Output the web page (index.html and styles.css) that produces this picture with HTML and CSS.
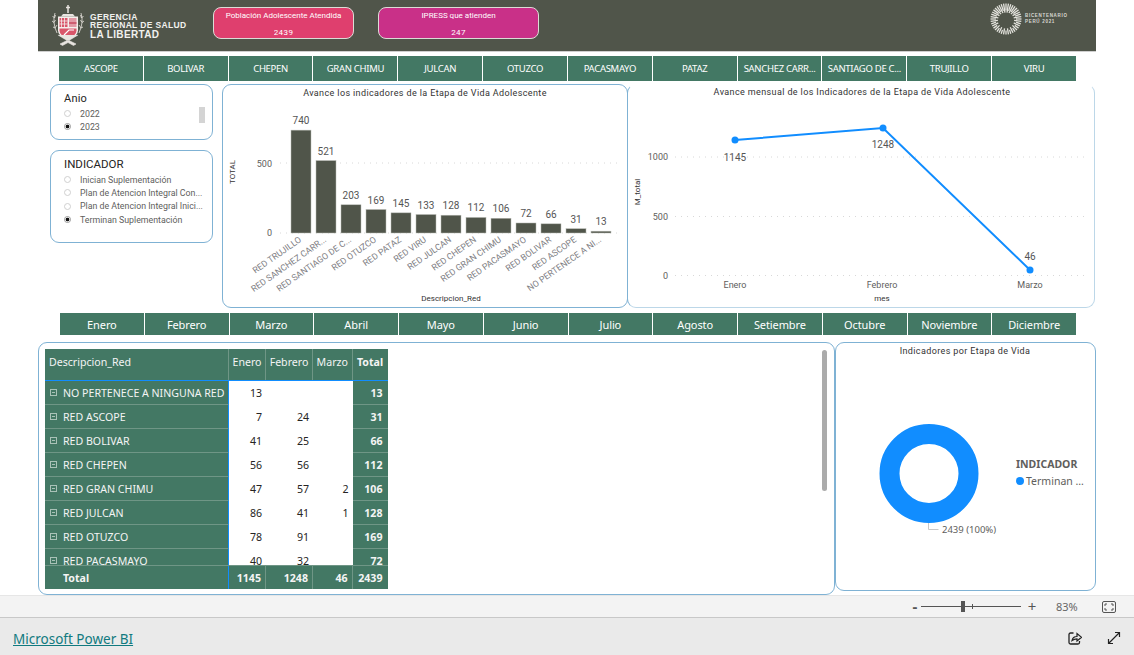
FILE: index.html
```html
<!DOCTYPE html>
<html lang="es">

<head>
    <meta charset="UTF-8">
    <title>Microsoft Power BI</title>
    <link rel="stylesheet" href="styles.css">
</head>

<body>
    <main class="report">
        <header class="banner">
            <div class="brand">
                <svg class="shield" viewBox="0 0 36 44" width="36" height="44">
                    <path d="M16 1v8M14 3.500h4" stroke="#e8e4e0" stroke-width="1.500" fill="none"/>
                    <path d="M11 10h10l2 2.500H9z" fill="#e8e4e0"/>
                    <path d="M6 12.500h20v14q0 6-10 9.500q-10-3.500-10-9.500z" fill="#f4efec"/>
                    <rect x="7.500" y="14" width="8" height="9" fill="#d9566a"/>
                    <path d="M9.500 14v9M12.500 14v9M7.500 17h8M7.500 20h8" stroke="#f4efec" stroke-width="0.800"/>
                    <rect x="17" y="14" width="7.500" height="9" fill="#e39aa6"/>
                    <path d="M17 19h7.500" stroke="#c9495f" stroke-width="1.500"/>
                    <path d="M7.500 24.500h17v2q0 5-8.500 8q-8.500-3-8.500-8z" fill="#d9566a"/>
                    <path d="M12 31l5-5h5" stroke="#fff" stroke-width="1.200" fill="none"/>
                    <path d="M3 9q-3 9 2 20M0.500 12l2 2M3.500 11l-1 3M0 17l2 1.500M3.500 16l-1.500 2.500M1 23l2 1M5 21l-2 3M29 9q3 9-2 20M31.500 12l-2 2M28.500 11l1 3M32 17l-2 1.500M28.500 16l1.500 2.500M31 23l-2 1M27 21l2 3" stroke="#e8e4e0" stroke-width="0.800" fill="none"/>
                    <path d="M6 31l10 6l10-6M8 40l8-4l8 4l-2.500 1.500l-5.500-3l-5.500 3z" stroke="#e8e4e0" fill="#e8e4e0" stroke-width="0.600"/>
                </svg>
                <div class="brand-text">
                    <span>GERENCIA</span>
                    <span>REGIONAL DE SALUD</span>
                    <span class="brand-big">LA LIBERTAD</span>
                </div>
            </div>
            <div class="kpi kpi-red">
                <span>Población Adolescente Atendida</span>
                <span>2439</span>
            </div>
            <div class="kpi kpi-pink">
                <span>IPRESS que atienden</span>
                <span>247</span>
            </div>
            <div class="bicentenario">
                <svg id="sun" viewBox="0 0 32 32" width="32" height="32"></svg>
                <div class="bicentenario-text">
                    <span>BICENTENARIO</span>
                    <span>PERÚ 2021</span>
                </div>
            </div>
        </header>

        <nav class="tabs tabs-red">
            <a>ASCOPE</a>
            <a>BOLIVAR</a>
            <a>CHEPEN</a>
            <a>GRAN CHIMU</a>
            <a>JULCAN</a>
            <a>OTUZCO</a>
            <a>PACASMAYO</a>
            <a>PATAZ</a>
            <a>SANCHEZ CARR...</a>
            <a>SANTIAGO DE C...</a>
            <a>TRUJILLO</a>
            <a>VIRU</a>
        </nav>

        <section class="row-top">
            <div class="slicers">
                <div class="card slicer slicer-year">
                    <h3>Anio</h3>
                    <div class="slicer-scroll"></div>
                    <label class="opt"><i class="radio"></i>2022</label>
                    <label class="opt"><i class="radio on"></i>2023</label>
                </div>
                <div class="card slicer slicer-ind">
                    <h3>INDICADOR</h3>
                    <label class="opt"><i class="radio"></i>Inician Suplementación</label>
                    <label class="opt"><i class="radio"></i>Plan de Atencion Integral Con...</label>
                    <label class="opt"><i class="radio"></i>Plan de Atencion Integral Inici...</label>
                    <label class="opt"><i class="radio on"></i>Terminan Suplementación</label>
                </div>
            </div>

            <div class="card chart-bar">
                <svg id="bars" viewBox="0 0 405 224" width="405" height="224">
                    <text class="chart-title" x="203" y="12">Avance los indicadores de la Etapa de Vida Adolescente</text>
                    <text class="axis-name" transform="translate(13 88) rotate(-90)">TOTAL</text>
                    <text class="axis-name" x="229" y="217">Descripcion_Red</text>
                    <text class="tick" x="50" y="83" text-anchor="end">500</text>
                    <text class="tick" x="50" y="152" text-anchor="end">0</text>
                    <line class="grid" x1="58" y1="79" x2="400" y2="79"/>
                    <line class="grid" x1="58" y1="149" x2="400" y2="149"/>
                </svg>
            </div>

            <div class="card chart-line">
                <svg viewBox="0 0 468 224" width="468" height="224">
                    <text class="chart-title" x="235" y="11">Avance mensual de los Indicadores de la Etapa de Vida Adolescente</text>
                    <text class="axis-name" transform="translate(13 108) rotate(-90)">M_total</text>
                    <text class="axis-name" x="255" y="217">mes</text>
                    <text class="tick" x="41" y="76" text-anchor="end">1000</text>
                    <text class="tick" x="41" y="136" text-anchor="end">500</text>
                    <text class="tick" x="41" y="195" text-anchor="end">0</text>
                    <line class="grid" x1="48" y1="73" x2="461" y2="73"/>
                    <line class="grid" x1="48" y1="132.500" x2="461" y2="132.500"/>
                    <line class="grid" x1="48" y1="191.500" x2="461" y2="191.500"/>
                    <polyline class="trend" points="108,56 256,44 403,186"/>
                    <circle class="dot" cx="108" cy="56" r="3.500"/>
                    <circle class="dot" cx="256" cy="44" r="3.500"/>
                    <circle class="dot" cx="403" cy="186" r="3.500"/>
                    <text class="value" x="108" y="77">1145</text>
                    <text class="value" x="256" y="64">1248</text>
                    <text class="value" x="403" y="176">46</text>
                    <text class="tick" x="108" y="204" text-anchor="middle">Enero</text>
                    <text class="tick" x="255" y="204" text-anchor="middle">Febrero</text>
                    <text class="tick" x="403" y="204" text-anchor="middle">Marzo</text>
                </svg>
            </div>
        </section>

        <nav class="tabs tabs-month">
            <a>Enero</a>
            <a>Febrero</a>
            <a>Marzo</a>
            <a>Abril</a>
            <a>Mayo</a>
            <a>Junio</a>
            <a>Julio</a>
            <a>Agosto</a>
            <a>Setiembre</a>
            <a>Octubre</a>
            <a>Noviembre</a>
            <a>Diciembre</a>
        </nav>

        <section class="row-bottom">
            <div class="card matrix-card">
                <div class="matrix">
                    <div class="m-head">
                        <div class="m-name">Descripcion_Red</div>
                        <div>Enero</div>
                        <div>Febrero</div>
                        <div>Marzo</div>
                        <div class="m-total">Total</div>
                    </div>
                    <div class="m-body" id="matrix-body"></div>
                    <div class="m-foot">
                        <div class="m-name m-foot-name">Total</div>
                        <div>1145</div>
                        <div>1248</div>
                        <div>46</div>
                        <div>2439</div>
                    </div>
                </div>
                <div class="scrollbar"></div>
            </div>

            <div class="card chart-donut">
                <svg viewBox="0 0 261 249" width="261" height="249">
                    <text class="chart-title" x="130" y="12">Indicadores por Etapa de Vida</text>
                    <circle class="ring" cx="94" cy="131.500" r="39.500"/>
                    <path class="leader" d="M93.500 181v6.500h10"/>
                    <text class="donut-label" x="107" y="191">2439 (100%)</text>
                    <text class="legend-title" x="181" y="126">INDICADOR</text>
                    <circle class="dot" cx="185" cy="139" r="4"/>
                    <text class="legend-item" x="191" y="143">Terminan ...</text>
                </svg>
            </div>
        </section>
    </main>

    <div class="zoom-bar">
        <span class="zoom-sign">-</span>
        <div class="zoom-track"><i class="zoom-mark"></i><i class="zoom-thumb"></i></div>
        <span class="zoom-sign zoom-plus">+</span>
        <span class="zoom-pct">83%</span>
        <svg class="fit" viewBox="0 0 14 12" width="14" height="12">
            <rect x="0.500" y="0.500" width="13" height="11" rx="1.500" fill="none" stroke="#555"/>
            <path d="M3 5V3h2M9 3h2v2M11 7v2H9M5 9H3V7" fill="none" stroke="#555"/>
        </svg>
    </div>

    <footer class="foot">
        <a class="foot-link">Microsoft Power BI</a>
        <div class="foot-icons">
            <svg viewBox="0 0 14 14" width="14" height="14">
                <path d="M5.500 2H2.500A1.500 1.500 0 0 0 1 3.500v8A1.500 1.500 0 0 0 2.500 13h7.500a1.500 1.500 0 0 0 1.500-1.500V10" fill="none" stroke="#222" stroke-width="1.300"/>
                <path d="M4 9.500q.8-4 5-4V2.500l4.500 3.800L9 10V7.800q-3 0-5 1.700z" fill="none" stroke="#222" stroke-width="1.200"/>
            </svg>
            <svg viewBox="0 0 14 14" width="14" height="14">
                <path d="M1.500 12.500l11-11M8 1.500h4.500V6M1.500 8v4.500H6" fill="none" stroke="#222" stroke-width="1.200"/>
            </svg>
        </div>
    </footer>

    <script>
        const barData = [
            ['RED TRUJILLO', 740], ['RED SANCHEZ CARR...', 521], ['RED SANTIAGO DE C...', 203],
            ['RED OTUZCO', 169], ['RED PATAZ', 145], ['RED VIRU', 133], ['RED JULCAN', 128],
            ['RED CHEPEN', 112], ['RED GRAN CHIMU', 106], ['RED PACASMAYO', 72],
            ['RED BOLIVAR', 66], ['RED ASCOPE', 31], ['NO PERTENECE A NI...', 13]
        ];
        const matrixData = [
            ['NO PERTENECE A NINGUNA RED', 13, '', '', 13],
            ['RED ASCOPE', 7, 24, '', 31],
            ['RED BOLIVAR', 41, 25, '', 66],
            ['RED CHEPEN', 56, 56, '', 112],
            ['RED GRAN CHIMU', 47, 57, 2, 106],
            ['RED JULCAN', 86, 41, 1, 128],
            ['RED OTUZCO', 78, 91, '', 169],
            ['RED PACASMAYO', 40, 32, '', 72]
        ];
        const svgNs = 'http://www.w3.org/2000/svg';

        function addSvg(parent, tag, attrs, text) {
            const el = document.createElementNS(svgNs, tag);
            for (const key in attrs) el.setAttribute(key, attrs[key]);
            if (text !== undefined) el.textContent = text;
            parent.appendChild(el);
        }

        const bars = document.querySelector('#bars');
        barData.forEach((item, i) => {
            const x = 69 + i * 25;
            const h = item[1] * 0.139;
            addSvg(bars, 'rect', { class: 'bar', x: x, y: 149 - h, width: 20, height: h });
            addSvg(bars, 'text', { class: 'value', x: x + 10, y: 149 - h - 6 }, item[1]);
            addSvg(bars, 'text', {
                class: 'cat',
                transform: `translate(${x + 11} 157) rotate(-35)`
            }, item[0]);
        });

        const body = document.querySelector('#matrix-body');
        matrixData.forEach((row) => {
            const line = document.createElement('div');
            line.className = 'm-row';
            row.forEach((cell, i) => {
                const div = document.createElement('div');
                if (i === 0) {
                    div.className = 'm-name';
                    div.innerHTML = '<i class="plus"></i>';
                    div.append(cell);
                } else {
                    if (i === 4) div.className = 'm-total';
                    div.textContent = cell;
                }
                line.appendChild(div);
            });
            body.appendChild(line);
        });

        const sun = document.querySelector('#sun');
        for (let i = 0; i < 40; i++) {
            const a = i / 40 * Math.PI * 2;
            const inner = (i % 2 ? 8 : 10) + Math.sin(a) * 1.5;
            addSvg(sun, 'line', {
                x1: 16 + Math.cos(a) * inner,
                y1: 16 + Math.sin(a) * inner,
                x2: 16 + Math.cos(a) * 15.5,
                y2: 16 + Math.sin(a) * 15.5,
                stroke: '#e4e4de',
                'stroke-width': 1.300
            });
        }
    </script>
</body>

</html>
```

FILE: styles.css
```css
* {
    box-sizing: border-box;
}

html,
body {
    height: 100%;
}

body {
    margin: 0;
    width: 1134px;
    height: 655px;
    overflow: hidden;
    background-color: #fff;
    font-family: "Noto Sans", "Open Sans", sans-serif;
    color: #333;
}

.report {
    width: 1058px;
    height: 595px;
    margin-left: 38px;
    overflow: hidden;
}

/* banner */
.banner {
    height: 52px;
    background-color: #50554a;
    border-bottom: 1px solid #cfcfcf;
    display: flex;
    align-items: flex-start;
    padding-left: 14px;
}

.brand {
    width: 161px;
    display: flex;
    align-items: center;
    gap: 2px;
    padding-top: 4px;
}

.brand-text {
    display: flex;
    flex-direction: column;
    font-family: "Liberation Sans", sans-serif;
    font-weight: bold;
    font-size: 8.500px;
    line-height: 8.500px;
    letter-spacing: 0.35px;
    color: #f1f1ee;
}

.brand-big {
    font-size: 10px;
    line-height: 10px;
    letter-spacing: 0.35px;
}

.kpi {
    height: 32px;
    margin-top: 7px;
    border: 1px solid #dcdcd6;
    border-radius: 8px;
    color: #fff;
    font-family: Roboto, sans-serif;
    font-size: 8px;
    display: flex;
    flex-direction: column;
    justify-content: space-between;
    align-items: center;
    padding: 3px 0 2px;
}

.kpi span:last-child {
    line-height: 10px;
    height: 8px;
    overflow: hidden;
    letter-spacing: 0.4px;
}

.kpi-red {
    width: 141px;
    background-color: #df3f6e;
}

.kpi-pink {
    width: 161px;
    margin-left: 24px;
    background-color: #c93088;
}

.bicentenario {
    display: flex;
    align-items: center;
    gap: 3px;
    margin-left: 451px;
    padding-top: 3px;
}

.bicentenario-text {
    display: flex;
    flex-direction: column;
    font-family: "Liberation Sans", sans-serif;
    font-size: 4.500px;
    line-height: 6px;
    letter-spacing: 0.7px;
    font-weight: bold;
    color: #d8d8d2;
}

/* tab buttons */
.tabs {
    display: flex;
    gap: 1px;
    margin-left: 21px;
    width: 1017px;
    height: 25px;
    margin-top: 4px;
}

.tabs a {
    flex: 1;
    display: flex;
    align-items: center;
    justify-content: center;
    white-space: nowrap;
    overflow: hidden;
    background-color: #437864;
    color: #fff;
    font-family: "Noto Sans", sans-serif;
}

.tabs-red a {
    font-size: 9.500px;
    letter-spacing: -0.3px;
}

.tabs-month {
    margin-top: 5px;
    margin-left: 22px;
    width: 1016px;
    height: 22px;
}

.tabs-month a {
    font-size: 11px;
    letter-spacing: -0.1px;
}

/* panels */
.card {
    border: 1px solid #7fb2d4;
    border-radius: 9px;
    background-color: #fff;
}

.row-top {
    display: flex;
    margin-top: 3px;
    height: 224px;
}

.slicers {
    width: 163px;
    margin-left: 12px;
    margin-right: 9px;
    display: flex;
    flex-direction: column;
    gap: 10px;
}

.slicer {
    position: relative;
    padding: 6px 12px 0 13px;
    font-family: Roboto, sans-serif;
}

.slicer-year {
    height: 56px;
}

.slicer-ind {
    height: 93px;
    padding-top: 6px;
}

.slicer h3 {
    margin: 0 0 1px;
    font-size: 11px;
    line-height: 15px;
    font-weight: 400;
    color: #252423;
    letter-spacing: 0.2px;
}

.slicer-ind h3 {
    font-size: 11.500px;
    letter-spacing: 0;
    margin-bottom: 1px;
}

.opt {
    display: flex;
    align-items: center;
    height: 13.300px;
    font-size: 8.800px;
    color: #605e5c;
    white-space: nowrap;
}

.radio {
    width: 7px;
    height: 7px;
    margin-right: 9px;
    border: 1px solid #d0d0d0;
    border-radius: 50%;
    background-color: #fff;
    flex: none;
}

.radio.on {
    border-color: #999;
    background: radial-gradient(circle, #111 0 1.500px, #fff 2.200px);
}

.slicer-scroll {
    position: absolute;
    top: 22px;
    right: 7px;
    width: 6px;
    height: 16px;
    background-color: #d4d4d4;
}

.chart-bar {
    width: 406px;
    height: 224px;
    overflow: hidden;
}

.chart-line {
    width: 468px;
    height: 224px;
    margin-left: -1px;
    overflow: hidden;
    border-color: transparent #bcd7e8 #bcd7e8 #7fb2d4;
}

.card svg {
    display: block;
    margin: -1px;
}

.chart-title {
    font-family: Roboto, sans-serif;
    font-size: 9px;
    letter-spacing: 0.38px;
    fill: #333;
    text-anchor: middle;
}

.axis-name {
    font-family: Roboto, sans-serif;
    font-size: 8px;
    fill: #333;
    text-anchor: middle;
}

.tick {
    font-family: Roboto, sans-serif;
    font-size: 9px;
    fill: #605e5c;
}

.value {
    font-family: Roboto, sans-serif;
    font-size: 10px;
    fill: #555;
    text-anchor: middle;
}

.cat {
    font-family: Roboto, sans-serif;
    font-size: 8.800px;
    fill: #808084;
    text-anchor: end;
}

.grid {
    stroke: #d8d8d8;
    stroke-width: 1;
    stroke-dasharray: 1 5;
}

.bar {
    fill: #50554a;
    stroke: #b9bbb5;
    stroke-width: 0.500;
}

.trend {
    fill: none;
    stroke: #118dff;
    stroke-width: 2;
}

.dot {
    fill: #118dff;
}

/* bottom row */
.row-bottom {
    display: flex;
    margin-top: 7px;
    height: 253px;
}

.matrix-card {
    position: relative;
    width: 797px;
    height: 253px;
    padding: 6px 0 0 6px;
}

.matrix {
    width: 342.500px;
    height: 240px;
    display: flex;
    flex-direction: column;
    background-color: #437864;
    font-family: "Noto Sans", sans-serif;
    font-size: 10.600px;
    color: #f4f4f4;
}

.m-head,
.m-row,
.m-foot {
    display: grid;
    grid-template-columns: 184px 37px 47px 39.500px 35px;
    flex: none;
}

.m-head {
    height: 32px;
    border-bottom: 1px solid #118dff;
}

.m-head > div {
    display: flex;
    align-items: center;
    justify-content: center;
    padding-bottom: 5px;
    border-right: 1px solid #6f9686;
}

.m-head > div:last-child {
    border-right: 0;
}

.m-head .m-name {
    justify-content: flex-start;
    padding-left: 4px;
}

.m-total {
    font-weight: bold;
}

.m-body {
    flex: 1;
    overflow: hidden;
}

.m-row {
    height: 24px;
}

.m-row > div {
    display: flex;
    align-items: center;
    justify-content: flex-end;
    padding-right: 4px;
    background-color: #fff;
    color: #252423;
}

.m-row > .m-name {
    justify-content: flex-start;
    padding: 0 0 0 5px;
    background-color: #437864;
    color: #f4f4f4;
    border-right: 1px solid #118dff;
    border-bottom: 1px solid #6f9686;
    white-space: nowrap;
}

.m-row > .m-total {
    padding-right: 5px;
    background-color: #437864;
    color: #f4f4f4;
    border-bottom: 1px solid #6f9686;
}

.plus {
    position: relative;
    width: 7px;
    height: 7px;
    margin-right: 6px;
    border: 1px solid #a9c2b7;
    flex: none;
}

.plus::after {
    content: "";
    position: absolute;
    left: 1px;
    right: 1px;
    top: 2px;
    height: 1px;
    background-color: #a9c2b7;
}

.m-foot {
    height: 24px;
    border-top: 1px solid #6f9686;
    font-weight: bold;
}

.m-foot > div {
    display: flex;
    align-items: center;
    justify-content: flex-end;
    padding-right: 4px;
    border-right: 1px solid #6f9686;
}

.m-foot > div:last-child {
    padding-right: 5px;
    border-right: 0;
}

.m-foot .m-foot-name {
    justify-content: flex-start;
    padding-left: 18px;
    border-right-color: #118dff;
}

.scrollbar {
    position: absolute;
    top: 7px;
    right: 7px;
    width: 5px;
    height: 141px;
    border-radius: 3px;
    background-color: #ababab;
}

.chart-donut {
    width: 261px;
    height: 249px;
    overflow: hidden;
}

.ring {
    fill: none;
    stroke: #118dff;
    stroke-width: 20px;
}

.leader {
    fill: none;
    stroke: #c8c8c8;
}

.donut-label {
    font-family: "Noto Sans", sans-serif;
    font-size: 9.500px;
    fill: #605e5c;
}

.legend-title {
    font-family: "Noto Sans", sans-serif;
    font-size: 10.500px;
    font-weight: bold;
    fill: #605e5c;
}

.legend-item {
    font-family: "Noto Sans", sans-serif;
    font-size: 10.500px;
    fill: #605e5c;
}

/* bottom bars */
.zoom-bar {
    height: 23px;
    background-color: #f3f3f3;
    border-top: 1px solid #e6e6e6;
    border-bottom: 1px solid #c8c8c8;
    display: flex;
    align-items: center;
    padding-left: 909px;
    font-family: "Noto Sans", sans-serif;
    color: #555;
}

.zoom-sign {
    font-size: 15px;
    line-height: 15px;
    width: 12px;
    text-align: center;
    font-weight: bold;
}

.zoom-plus {
    margin-left: 5px;
    font-weight: normal;
}

.zoom-track {
    position: relative;
    width: 100px;
    height: 1px;
    background-color: #555;
}

.zoom-thumb {
    position: absolute;
    left: 40px;
    top: -5px;
    width: 4px;
    height: 11px;
    background-color: #555;
}

.zoom-mark {
    position: absolute;
    left: 51px;
    top: -2px;
    width: 1px;
    height: 5px;
    background-color: #555;
}

.zoom-pct {
    margin-left: 18px;
    font-size: 11px;
    color: #666;
}

.fit {
    margin-left: 24px;
}

.foot {
    height: 37px;
    background-color: #eaeaea;
    display: flex;
    align-items: center;
    justify-content: space-between;
    padding: 3px 13px 0;
}

.foot-link {
    margin-top: 1px;
    font-family: "Noto Sans", sans-serif;
    font-size: 13.500px;
    color: #117a7f;
    text-decoration: underline;
}

.foot-icons {
    display: flex;
    gap: 25px;
}
```
